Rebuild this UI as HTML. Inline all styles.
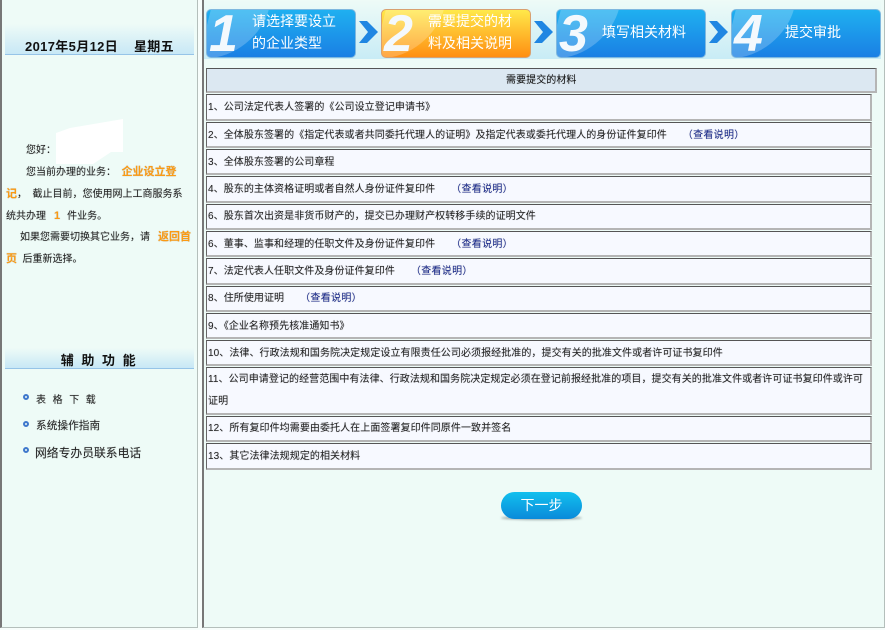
<!DOCTYPE html>
<html lang="zh">
<head>
<meta charset="utf-8">
<title>需要提交的材料</title>
<style>
html,body{margin:0;padding:0;background:#f7fdfb;}
body{width:885px;height:630px;position:relative;overflow:hidden;font-family:"Liberation Sans","WenQuanYi Zen Hei","Noto Sans CJK SC",sans-serif;font-size:10px;color:#222;}
.a{position:absolute;}
.panel{background:#eefbf7;border:1px solid #b4bfbb;border-left:2px solid #777;border-top:none;box-sizing:border-box;}
.band{position:absolute;left:5px;width:189px;background:linear-gradient(#eefbf7,#c8e8f6);border-bottom:1px solid #96c4e8;box-sizing:border-box;text-align:center;font-weight:bold;color:#111;}
.t{position:absolute;white-space:nowrap;line-height:16px;text-shadow:0 0 1px rgba(0,0,0,.25);}
.o{color:#fb9a14;font-weight:bold;font-size:11px;}
.step{position:absolute;top:9px;height:49px;width:150px;box-sizing:border-box;border-radius:5px;background:linear-gradient(#1fb0f0,#1a7fe4);border:1px solid #7fb8df;overflow:hidden;color:#fff;}
.step.y{background:linear-gradient(#ffe94a 0%,#ffc030 45%,#ff8f12 100%);border-color:#d8a070;}
.gl{position:absolute;left:0;top:-18px;width:58px;height:66px;background:rgba(255,255,255,.22);border-radius:0 0 50px 0;transform:skewX(-14deg);}
.num{position:absolute;left:2px;top:-6px;font:italic bold 52px/60px "Liberation Sans",sans-serif;color:#f4f9fd;}
.lb{position:absolute;font-size:14px;line-height:22px;text-align:left;color:#fff;white-space:nowrap;}
.chev{position:absolute;top:21px;}
.box{position:absolute;left:206px;width:666px;box-sizing:border-box;background:#f7f9ff;border:1px solid;border-color:#555 #b5b5b5 #b5b5b5 #666;border-width:1px 2px 2px 1px;}
.r{position:absolute;left:208px;white-space:nowrap;font-size:10px;line-height:14px;color:#222;letter-spacing:.07px;text-shadow:0 0 1px rgba(0,0,0,.25);}
.r b{font-weight:normal;color:#1a2a8c;margin-left:16px;letter-spacing:.3px;}
.dot{position:absolute;left:23px;border-radius:50%;background:#eefbf7;border:2px solid #3f78cc;box-sizing:content-box;width:2px;height:2px;}
</style>
</head>
<body>
<div class="a panel" style="left:0;top:0;width:198px;height:628px;"></div>
<div class="a panel" style="left:202px;top:0;width:683px;height:628px;"></div>

<!-- step strip -->
<div class="a" style="left:204px;top:0;width:677px;height:59px;background:linear-gradient(#eefbf7,#c8ecf6);"></div>

<div class="band" style="top:24px;height:31px;padding-top:15px;font-size:13px;line-height:15px;letter-spacing:.35px;font-weight:bold;">2017年5月12日&nbsp;&nbsp;&nbsp;&nbsp;星期五</div>

<div class="t" style="left:26px;top:143px;">您好：</div>
<div class="a" style="left:56px;top:119px;width:67px;height:45px;background:#fff;clip-path:polygon(14px 9px,67px 0,67px 33px,55px 33px,37px 45px,0 45px,0 14px);"></div>
<div class="t" style="left:26px;top:164px;">您当前办理的业务：&nbsp;&nbsp;<span class="o">企业设立登</span></div>
<div class="t" style="left:6px;top:186px;"><span class="o">记</span>，&nbsp;&nbsp;截止目前，您使用网上工商服务系</div>
<div class="t" style="left:6px;top:208px;">统共办理<span class="o" style="margin:0 7px 0 8px;">1</span>件业务。</div>
<div class="t" style="left:20px;top:229px;">如果您需要切换其它业务，请<span class="o" style="margin-left:8px;">返回首</span></div>
<div class="t" style="left:6px;top:251px;"><span class="o">页</span>&nbsp;&nbsp;后重新选择。</div>

<div class="band" style="top:348px;height:21px;font-size:13px;line-height:26px;letter-spacing:7.6px;padding-left:5px;">辅助功能</div>

<div class="dot" style="top:394px;"></div>
<div class="t" style="left:36px;top:393px;letter-spacing:6.6px;">表格下载</div>
<div class="dot" style="top:421px;"></div>
<div class="t" style="left:36px;top:418px;font-size:10.7px;">系统操作指南</div>
<div class="dot" style="top:447px;"></div>
<div class="t" style="left:35px;top:445px;font-size:11.8px;">网络专办员联系电话</div>

<!-- steps -->
<div class="step" style="left:206px;"><div class="gl"></div><div class="num">1</div><div class="lb" style="left:45px;top:0;">请选择要设立<br>的企业类型</div></div>
<svg class="chev" style="left:359px;" width="20" height="22" viewBox="0 0 20 22"><path d="M0 0H8L19 11L8 22H0L9 11Z" fill="#1f86e2"/></svg>
<div class="step y" style="left:381px;"><div class="gl"></div><div class="num">2</div><div class="lb" style="left:46px;top:0;">需要提交的材<br>料及相关说明</div></div>
<svg class="chev" style="left:534px;" width="20" height="22" viewBox="0 0 20 22"><path d="M0 0H8L19 11L8 22H0L9 11Z" fill="#1f86e2"/></svg>
<div class="step" style="left:556px;"><div class="gl"></div><div class="num">3</div><div class="lb" style="left:45px;top:11px;">填写相关材料</div></div>
<svg class="chev" style="left:709px;" width="20" height="22" viewBox="0 0 20 22"><path d="M0 0H8L19 11L8 22H0L9 11Z" fill="#1f86e2"/></svg>
<div class="step" style="left:731px;"><div class="gl"></div><div class="num">4</div><div class="lb" style="left:53px;top:11px;">提交审批</div></div>

<!-- table -->
<div class="box" style="top:68px;width:671px;height:25px;background:#dce8f2;"></div>
<div class="r" style="left:506px;top:74px;color:#111;">需要提交的材料</div>

<div class="box" style="top:94px;height:27px;"></div>
<div class="box" style="top:122px;height:26px;"></div>
<div class="box" style="top:149px;height:26px;"></div>
<div class="box" style="top:176px;height:27px;"></div>
<div class="box" style="top:204px;height:26px;"></div>
<div class="box" style="top:231px;height:26px;"></div>
<div class="box" style="top:258px;height:27px;"></div>
<div class="box" style="top:286px;height:26px;"></div>
<div class="box" style="top:313px;height:26px;"></div>
<div class="box" style="top:340px;height:26px;"></div>
<div class="box" style="top:367px;height:48px;"></div>
<div class="box" style="top:416px;height:26px;"></div>
<div class="box" style="top:443px;height:27px;"></div>

<div class="r" style="top:101px;">1、公司法定代表人签署的《公司设立登记申请书》</div>
<div class="r" style="top:129px;">2、全体股东签署的《指定代表或者共同委托代理人的证明》及指定代表或委托代理人的身份证件复印件<b>（查看说明）</b></div>
<div class="r" style="top:156px;">3、全体股东签署的公司章程</div>
<div class="r" style="top:183px;">4、股东的主体资格证明或者自然人身份证件复印件<b>（查看说明）</b></div>
<div class="r" style="top:210px;">6、股东首次出资是非货币财产的，提交已办理财产权转移手续的证明文件</div>
<div class="r" style="top:238px;">6、董事、监事和经理的任职文件及身份证件复印件<b>（查看说明）</b></div>
<div class="r" style="top:265px;">7、法定代表人任职文件及身份证件复印件<b>（查看说明）</b></div>
<div class="r" style="top:292px;">8、住所使用证明<b>（查看说明）</b></div>
<div class="r" style="top:320px;">9、《企业名称预先核准通知书》</div>
<div class="r" style="top:347px;">10、法律、行政法规和国务院决定规定设立有限责任公司必须报经批准的，提交有关的批准文件或者许可证书复印件</div>
<div class="r" style="top:373px;">11、公司申请登记的经营范围中有法律、行政法规和国务院决定规定必须在登记前报经批准的项目，提交有关的批准文件或者许可证书复印件或许可</div>
<div class="r" style="top:395px;">证明</div>
<div class="r" style="top:422px;">12、所有复印件均需要由委托人在上面签署复印件同原件一致并签名</div>
<div class="r" style="top:450px;">13、其它法律法规规定的相关材料</div>

<!-- next button -->
<div class="a" style="left:501px;top:516px;width:81px;height:4px;border-radius:50%;background:#9aa8a8;filter:blur(1px);"></div>
<div class="a" style="left:501px;top:492px;width:81px;height:27px;border-radius:14px;background:linear-gradient(#12c0ee,#0a8ada);color:#fff;font-size:14px;line-height:27px;text-align:center;">下一步</div>
</body>
</html>
